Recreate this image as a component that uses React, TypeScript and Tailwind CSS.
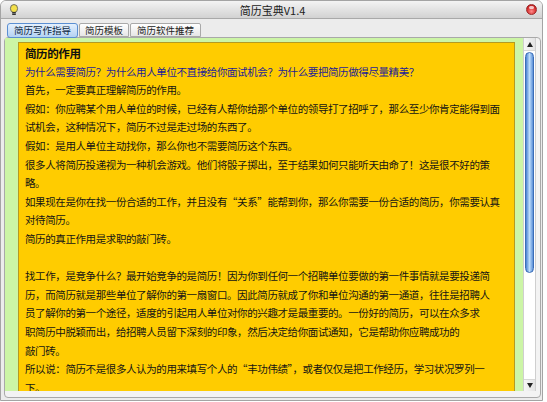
import React from "react";

const lines: { t: string; cls?: string }[] = [
  { t: "简历的作用", cls: "font-bold text-[11.5px] text-[#111]" },
  { t: "为什么需要简历？为什么用人单位不直接给你面试机会？为什么要把简历做得尽量精美？", cls: "text-[#1c1c96]" },
  { t: "首先，一定要真正理解简历的作用。" },
  { t: "假如：你应聘某个用人单位的时候，已经有人帮你给那个单位的领导打了招呼了，那么至少你肯定能得到面" },
  { t: "试机会，这种情况下，简历不过是走过场的东西了。" },
  { t: "假如：是用人单位主动找你，那么你也不需要简历这个东西。" },
  { t: "很多人将简历投递视为一种机会游戏。他们将骰子掷出，至于结果如何只能听天由命了！这是很不好的策" },
  { t: "略。" },
  { t: "如果现在是你在找一份合适的工作，并且没有“关系”能帮到你，那么你需要一份合适的简历，你需要认真" },
  { t: "对待简历。" },
  { t: "简历的真正作用是求职的敲门砖。" },
  { t: "" },
  { t: "找工作，是竞争什么？最开始竞争的是简历！因为你到任何一个招聘单位要做的第一件事情就是要投递简" },
  { t: "历，而简历就是那些单位了解你的第一扇窗口。因此简历就成了你和单位沟通的第一通道，往往是招聘人" },
  { t: "员了解你的第一个途径，适度的引起用人单位对你的兴趣才是最重要的。一份好的简历，可以在众多求" },
  { t: "职简历中脱颖而出，给招聘人员留下深刻的印象，然后决定给你面试通知，它是帮助你应聘成功的" },
  { t: "敲门砖。" },
  { t: "所以说：简历不是很多人认为的用来填写个人的“丰功伟绩”，或者仅仅是把工作经历，学习状况罗列一" },
  { t: "下。" },
];

export default function App() {
  return (
    <div className="w-[547px] h-[402px] bg-white font-['Noto_Sans_CJK_SC','Noto_Sans',sans-serif]">
      <div className="w-[543px] h-[401px] bg-[#ececec] border border-[#a4a4a4] rounded-t-[6px] flex flex-col overflow-hidden">
        {/* title bar */}
        <div className="h-[18px] shrink-0 flex items-center bg-gradient-to-b from-[#f4f4f4] to-[#d2d2d2] border-b border-[#a9a9a9]">
          <svg className="ml-[8px]" width="10" height="12" viewBox="0 0 10 12">
            <ellipse cx="5" cy="4.5" rx="3.6" ry="4" fill="#f3e04a" stroke="#555" strokeWidth="0.8" />
            <rect x="3.2" y="8" width="3.6" height="3" fill="#333" />
            <line x1="3" y1="9.5" x2="7" y2="9.5" stroke="#999" strokeWidth="0.6" />
          </svg>
          <div className="flex-1 text-center text-[11px] leading-[18px] text-[#222]">简历宝典V1.4</div>
          <div className="mr-[5px] w-[11px] h-[11px] rounded-full border border-[#9a2a2a] bg-[radial-gradient(circle_at_50%_70%,#ff8a8a,#d42a2a_60%,#a81818)] relative">
            <div className="absolute left-[2px] top-[1px] w-[5px] h-[3px] rounded-full bg-white/70" />
          </div>
        </div>

        {/* tabs */}
        <div className="h-[18px] shrink-0 flex items-end pl-[6px] gap-[1px] relative z-10">
          <div className="h-[15px] px-[6px] flex items-center text-[9.5px] text-[#0d1f40] rounded-[3px] border border-[#5b8fd2] bg-gradient-to-b from-[#e4f0fd] to-[#b4d2f3] mb-[-1px]">
            简历写作指导
          </div>
          <div className="h-[14px] px-[5px] flex items-center text-[9.5px] text-[#222] rounded-t-[2px] border border-[#a9a9a9] bg-gradient-to-b from-[#ffffff] to-[#e6e6e6]">
            简历模板
          </div>
          <div className="h-[14px] px-[6px] flex items-center text-[9.5px] text-[#222] rounded-t-[2px] border border-[#a9a9a9] bg-gradient-to-b from-[#ffffff] to-[#e6e6e6]">
            简历软件推荐
          </div>
        </div>

        {/* panel */}
        <div className="ml-[3px] w-[537px] h-[361px] border border-[#a9a9a9] rounded-[4px] bg-[#f3f3f3] flex flex-col pb-[6px] pr-[3px]">
          <div className="flex-1 flex min-h-0">
            {/* viewport */}
            <div className="w-[518px] bg-[#ccf5a6] overflow-hidden pl-[13px] pr-[8px] pt-[4px]">
              <div className="h-[400px] bg-[#ffcc00] border border-[#b49a22] pl-[6px] pt-[1px] text-[10.5px] tracking-[-0.4px] text-[#141414]">
                {lines.map((l, i) => (
                  <div key={i} className={"h-[18.6px] leading-[18.6px] whitespace-nowrap " + (l.cls ?? "")}>
                    {l.t}
                  </div>
                ))}
              </div>
            </div>
            {/* scrollbar */}
            <div className="w-[13px] flex flex-col bg-white border-x border-[#cfcfcf]">
              <div className="h-[13px] shrink-0 flex items-center justify-center border-b border-[#d8d8d8] bg-gradient-to-r from-[#f6f6f6] to-[#e4e4e4]">
                <svg width="6" height="5" viewBox="0 0 6 5"><path d="M3 0 L6 5 L0 5 Z" fill="#222" /></svg>
              </div>
              <div className="flex-1 flex flex-col pt-[1px]">
                <div className="h-[221px] mx-[1px] rounded-full border border-[#3a6db8] bg-gradient-to-r from-[#4a82d0] via-[#bddcfb] to-[#5b90d8]" />
              </div>
              <div className="h-[12px] shrink-0 flex items-center justify-center border-t border-[#d8d8d8] bg-gradient-to-r from-[#f6f6f6] to-[#e4e4e4]">
                <svg width="6" height="5" viewBox="0 0 6 5"><path d="M0 0 L6 0 L3 5 Z" fill="#222" /></svg>
              </div>
            </div>
          </div>
        </div>
      </div>
    </div>
  );
}
